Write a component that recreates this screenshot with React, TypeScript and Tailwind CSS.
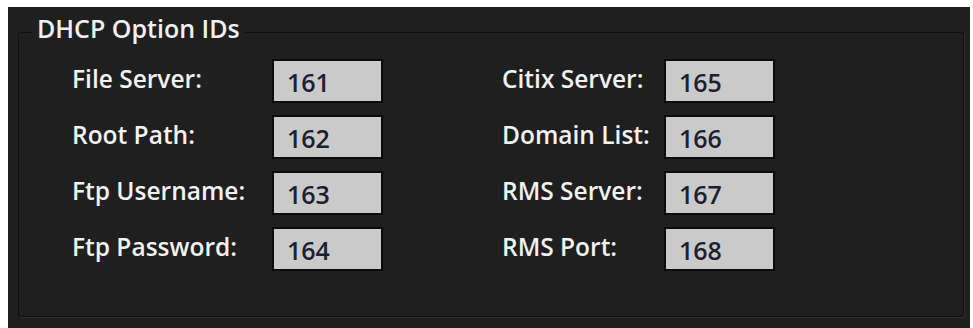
import React from 'react'

type Option = {
  label: string
  code: number
}

const leftOptions: Option[] = [
  { label: 'File Server:', code: 161 },
  { label: 'Root Path:', code: 162 },
  { label: 'Ftp Username:', code: 163 },
  { label: 'Ftp Password:', code: 164 },
]

const rightOptions: Option[] = [
  { label: 'Citix Server:', code: 165 },
  { label: 'Domain List:', code: 166 },
  { label: 'RMS Server:', code: 167 },
  { label: 'RMS Port:', code: 168 },
]

function OptionRow({ option, labelWidth }: { option: Option; labelWidth: string }) {
  return (
    <div className="flex items-center h-[44px]">
      <span className={`${labelWidth} pb-[3px] text-[24.5px] leading-none font-semibold text-[#f2f2f2]`}>
        {option.label}
      </span>
      <div className="h-[44px] w-[111px] border-2 border-[#0c0c0c] bg-[#cacaca] flex items-center pl-[13px] pt-[3px]">
        <span className="text-[25px] leading-none font-semibold text-[#1b2131]">{option.code}</span>
      </div>
    </div>
  )
}

export default function App() {
  return (
    <div className="w-[973px] h-[328px] bg-white pt-[7px] pl-[8px] pr-[3px]" style={{ fontFamily: '"Open Sans", "Noto Sans", sans-serif' }}>
      <div className="h-[321px] bg-[#1f1f1f] pt-[6px] pl-[10px] pr-[6px]">
        <fieldset className="h-[304px] rounded-[3px] border border-[#0f0f0f] shadow-[1px_1px_0_#2e2e2e]">
          <legend className="ml-[13px] px-[5px] pb-[8px] text-[25px] leading-[30px] font-semibold text-[#f0f0f0]">
            DHCP Option IDs
          </legend>
          <div className="flex pt-[8px] pl-[53px]">
            <div className="flex flex-col gap-3">
              {leftOptions.map(o => (
                <OptionRow key={o.code} option={o} labelWidth="w-[200px]" />
              ))}
            </div>
            <div className="flex flex-col gap-3 ml-[119px]">
              {rightOptions.map(o => (
                <OptionRow key={o.code} option={o} labelWidth="w-[162px]" />
              ))}
            </div>
          </div>
        </fieldset>
      </div>
    </div>
  )
}
